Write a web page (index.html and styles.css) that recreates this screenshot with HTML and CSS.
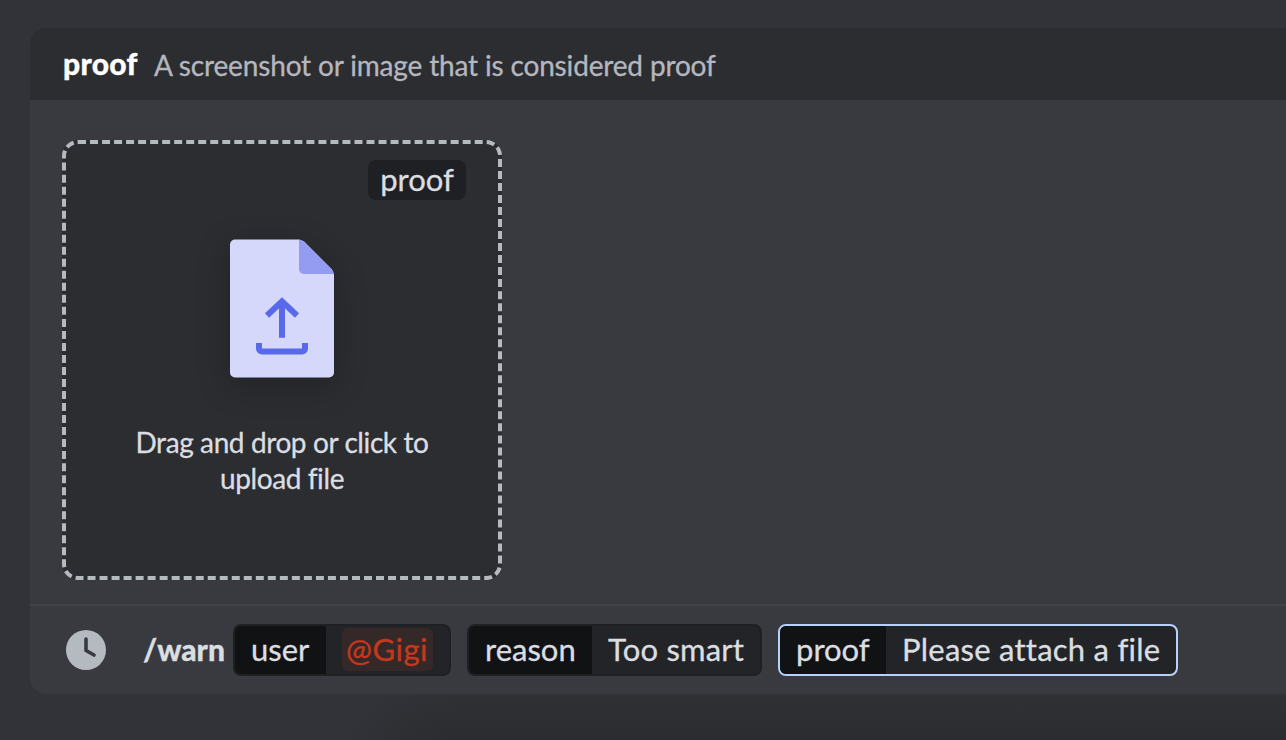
FILE: index.html
```html
<!DOCTYPE html>
<html lang="en">
<head>
<meta charset="utf-8">
<title>Warn command</title>
<link rel="stylesheet" href="styles.css">
</head>
<body>
<main class="composer">
  <header class="hint">
    <strong class="hint-name">proof</strong>
    <span class="hint-text">A screenshot or image that is considered proof</span>
  </header>
  <section class="attachments">
    <div class="dropzone">
      <span class="drop-tag">proof</span>
      <svg class="file-icon" width="104" height="139" viewBox="0 0 104 139">
        <path fill="#d5d7fb" d="M5 .5h64l5 2 28 28 2 5v98a5 5 0 0 1-5 5H5a5 5 0 0 1-5-5V5.500a5 5 0 0 1 5-5Z"/>
        <path fill="#949cf1" d="M69 .5q3 .5 5 2l27.500 27.500q2 2.500 2.300 5H74a5 5 0 0 1-5-5Z"/>
        <path fill="none" stroke="#5869ea" stroke-width="6" d="M52 98.700V62M37 76.500 52 62.300l15 14.200"/>
        <path fill="none" stroke="#5869ea" stroke-width="6" d="M29 104v5.500a3 3 0 0 0 3 3h40a3 3 0 0 0 3-3V104"/>
      </svg>
      <p class="drop-text">Drag and drop or click to<br>upload file</p>
    </div>
  </section>
  <footer class="command">
    <svg class="clock" width="40" height="40" viewBox="0 0 40 40">
      <circle cx="20" cy="20" r="20" fill="#b5bac1"/>
      <path d="M20 9v11.500l8 4.500" fill="none" stroke="#383a40" stroke-width="3.600" stroke-linecap="round" stroke-linejoin="round"/>
    </svg>
    <strong class="command-name">/warn</strong>
    <div class="option option-user"><span class="key">user</span><span class="value"><span class="mention">@Gigi</span></span></div>
    <div class="option option-reason"><span class="key">reason</span><span class="value">Too smart</span></div>
    <div class="option option-proof active"><span class="key">proof</span><span class="value">Please attach a file</span></div>
  </footer>
</main>
</body>
</html>
```
FILE: styles.css
```css
* { box-sizing: border-box; }
body {
  margin: 0;
  height: 740px;
  overflow: hidden;
  padding: 28px 0 0 30px;
  /* soft shadow rising from the bottom edge, rounded off on its left */
  background:
    radial-gradient(ellipse 130px 75px at 470px 752px, rgba(41, 42, 45, .95), rgba(41, 42, 45, 0)) 0 0 / 470px 740px no-repeat,
    linear-gradient(180deg, rgba(41, 42, 45, 0) 677px, rgba(41, 42, 45, .95) 752px) 470px 0 / 816px 740px no-repeat,
    #323338;
  font-family: Lato, "Open Sans", sans-serif;
  font-variant-ligatures: none;
  -webkit-text-stroke: .3px currentColor;
  color: #dbdee1;
}
.composer {
  height: 666px;
  display: flex;
  flex-direction: column;
  background: #393a3f;
  border-radius: 16px 0 0 16px;
  overflow: hidden;
  white-space: nowrap;
}
.hint {
  height: 72px;
  padding: 2px 0 0 33px;
  display: flex;
  align-items: center;
  gap: 16px;
  background: #2c2d31;
  font-size: 28px;
}
.hint-name {
  width: 75px;
  margin-top: -4px;
  color: #fff;
  font-size: 30px;
  font-weight: 900;
  letter-spacing: .3px;
}
.hint-text { color: #b5b7bf; letter-spacing: -.16px; }
.attachments { height: 504px; padding: 40px 32px 0; }
.dropzone {
  width: 440px;
  height: 440px;
  padding: 16px 32px;
  display: flex;
  flex-direction: column;
  align-items: center;
  background: #2c2d31;
  border: 4px dashed #b5bac1;
  border-radius: 16px;
}
.drop-tag {
  align-self: flex-end;
  width: 98px;
  height: 40px;
  border-radius: 8px;
  background: #1f2024;
  font-size: 31px;
  line-height: 38px;
  text-align: center;
}
.file-icon {
  flex: none;
  margin-top: 39px;
  filter: drop-shadow(0 8px 16px rgba(0, 0, 0, .24));
}
.drop-text {
  margin: 46px 0 0;
  font-size: 28px;
  line-height: 36px;
  letter-spacing: -.4px;
  text-align: center;
}
.command {
  height: 90px;
  padding: 0 0 0 36px;
  display: flex;
  align-items: center;
  border-top: 2px solid #424348;
  font-size: 31px;
}
.command-name {
  width: 90px;
  margin: -2px 0 0 37px;
  font-size: 30px;
  font-weight: 900;
}
.option {
  height: 52px;
  display: flex;
  border: 2px solid #1f2023;
  border-radius: 8px;
  background: #232428;
  overflow: hidden;
  line-height: 46px;
}
.key { background: #111214; padding-left: 16px; }
.value { padding-left: 16px; }
.option-user { width: 218px; margin-right: 16px; }
.option-reason { width: 295px; margin-right: 16px; }
.option-reason .value { letter-spacing: .2px; }
.option-proof { width: 400px; }
.option-proof .value { letter-spacing: .24px; }
.option-user .key { width: 91px; }
.option-reason .key { width: 123px; }
.option-proof .key { width: 106px; }
.active { border-color: #b6d1fb; }
.mention {
  display: block;
  width: 91px;
  height: 43px;
  margin-top: 2px;
  padding-left: 4px;
  border-radius: 6px;
  background: #352829;
  color: #c5381b;
  line-height: 42px;
  letter-spacing: .5px;
}
```
